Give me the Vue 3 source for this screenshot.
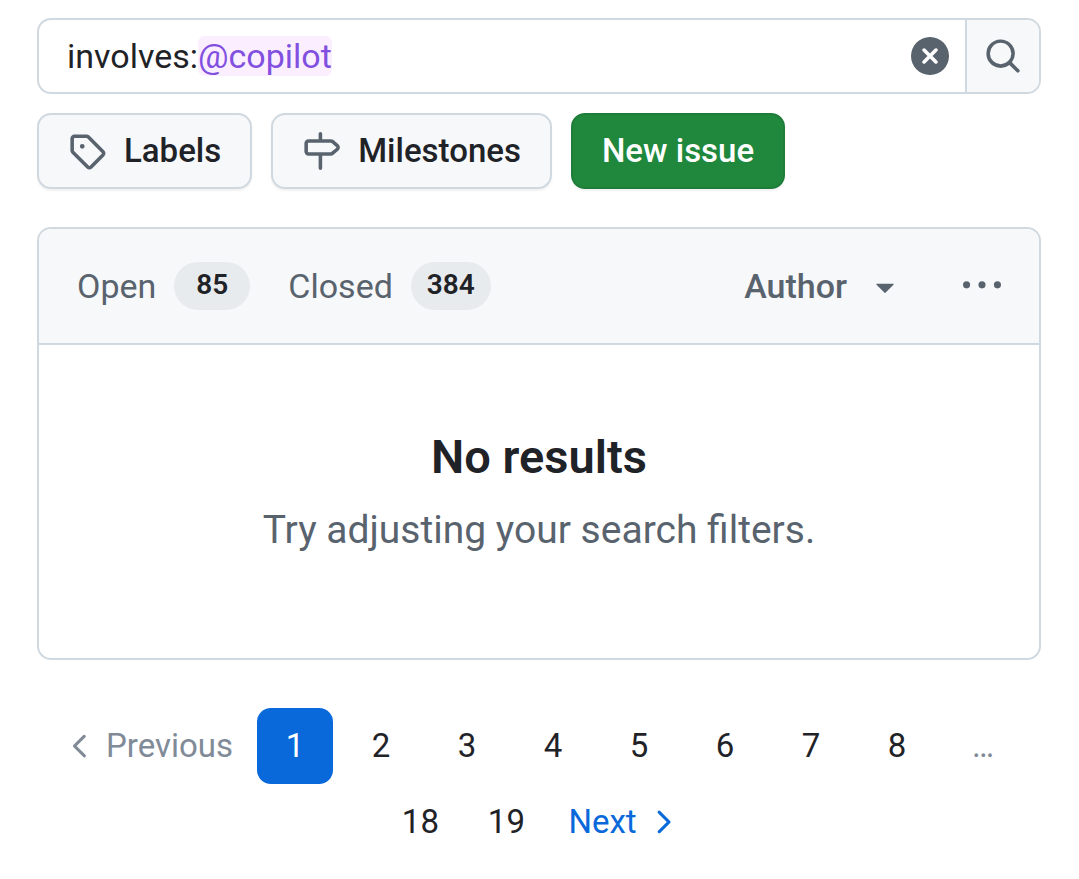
<template>
  <main class="issues">
    <form class="search" role="search" @submit.prevent>
      <div class="search-field">
        <div class="search-text" aria-hidden="true">
          <span v-for="(token, i) in tokens" :key="i" :class="{ 'search-value': token.isValue }">{{ token.text }}</span>
        </div>
        <input v-model="query" class="search-input" type="text" aria-label="Search issues" spellcheck="false" />
      </div>
      <button class="search-clear" type="button" aria-label="Clear filter" @click="query = ''">
        <svg class="icon" viewBox="0 0 16 16"><path :d="icons.clear" /></svg>
      </button>
      <button class="search-submit" type="submit" aria-label="Search">
        <svg class="icon" viewBox="0 0 16 16"><path :d="icons.search" /></svg>
      </button>
    </form>

    <div class="actions">
      <a class="btn" href="#labels">
        <svg class="icon" viewBox="0 0 16 16"><path :d="icons.tag" /></svg>
        Labels
      </a>
      <a class="btn" href="#milestones">
        <svg class="icon" viewBox="0 0 16 16"><path :d="icons.milestone" /></svg>
        Milestones
      </a>
      <a class="btn btn-primary" href="#new">New issue</a>
    </div>

    <section class="list">
      <header class="list-header">
        <a v-for="tab in tabs" :key="tab.name" class="tab" :href="tab.href">
          {{ tab.name }}
          <span class="counter">{{ tab.count }}</span>
        </a>
        <button class="filter" type="button" aria-haspopup="true">
          Author
          <svg class="icon" viewBox="0 0 16 16"><path :d="icons.triangle" /></svg>
        </button>
        <button class="more" type="button" aria-label="More filters" aria-haspopup="true">
          <svg class="icon" viewBox="0 0 16 16"><path :d="icons.kebab" /></svg>
        </button>
      </header>
      <div class="blank">
        <h2 class="blank-title">No results</h2>
        <p class="blank-text">Try adjusting your search filters.</p>
      </div>
    </section>

    <nav class="pagination" aria-label="Pagination">
      <span class="page page-step page-disabled">
        <svg class="icon" viewBox="0 0 16 16"><path :d="icons.left" /></svg>
        Previous
      </span>
      <template v-for="page in pages" :key="page">
        <span v-if="page === '…'" class="page page-disabled">{{ page }}</span>
        <a
          v-else
          class="page"
          :class="{ 'page-current': page === currentPage }"
          :href="`#page-${page}`"
          :aria-current="page === currentPage ? 'page' : undefined"
          @click="currentPage = page"
        >{{ page }}</a>
      </template>
      <a class="page page-step page-next" href="#next">
        Next
        <svg class="icon" viewBox="0 0 16 16"><path :d="icons.right" /></svg>
      </a>
    </nav>
  </main>
</template>

<script setup>
import { computed, ref } from 'vue'

const query = ref('involves:@copilot')
const currentPage = ref(1)

const tabs = [
  { name: 'Open', count: 85, href: '#open' },
  { name: 'Closed', count: 384, href: '#closed' }
]

const pages = [1, 2, 3, 4, 5, 6, 7, 8, '…', 18, 19]

// Everything after a "key:" is highlighted as a value
const tokens = computed(() => {
  return query.value
    .split(/(?<=:)(\S+)/)
    .map((text, i) => ({ text, isValue: i % 2 === 1 }))
    .filter((token) => token.text)
})

const icons = {
  clear: 'M2.343 13.657A8 8 0 1 1 13.658 2.343 8 8 0 0 1 2.343 13.657ZM6.03 4.97a.751.751 0 0 0-1.042.018.751.751 0 0 0-.018 1.042L6.94 8 4.97 9.97a.749.749 0 0 0 .326 1.275.749.749 0 0 0 .734-.215L8 9.06l1.97 1.97a.749.749 0 0 0 1.275-.326.749.749 0 0 0-.215-.734L9.06 8l1.97-1.97a.749.749 0 0 0-.326-1.275.749.749 0 0 0-.734.215L8 6.94Z',
  search: 'M10.68 11.74a6 6 0 0 1-7.922-8.982 6 6 0 0 1 8.982 7.922l3.04 3.04a.749.749 0 0 1-.326 1.275.749.749 0 0 1-.734-.215ZM11.5 7a4.499 4.499 0 1 0-8.997 0A4.499 4.499 0 0 0 11.5 7Z',
  tag: 'M1 7.775V2.75C1 1.784 1.784 1 2.75 1h5.025c.464 0 .91.184 1.238.513l6.25 6.25a1.75 1.75 0 0 1 0 2.474l-5.026 5.026a1.75 1.75 0 0 1-2.474 0l-6.25-6.25A1.752 1.752 0 0 1 1 7.775Zm1.5 0c0 .066.026.13.073.177l6.25 6.25a.25.25 0 0 0 .354 0l5.025-5.025a.25.25 0 0 0 0-.354l-6.25-6.25a.25.25 0 0 0-.177-.073H2.75a.25.25 0 0 0-.25.25ZM6 5a1 1 0 1 1 0 2 1 1 0 0 1 0-2Z',
  milestone: 'M7.75 0a.75.75 0 0 1 .75.75V3h3.634c.414 0 .814.147 1.13.414l2.07 1.75a1.75 1.75 0 0 1 0 2.672l-2.07 1.75a1.75 1.75 0 0 1-1.13.414H8.5v5.25a.75.75 0 0 1-1.5 0V10H2.75A1.75 1.75 0 0 1 1 8.25v-3.5C1 3.784 1.784 3 2.75 3H7V.75A.75.75 0 0 1 7.75 0Zm4.384 8.5a.25.25 0 0 0 .161-.06l2.07-1.75a.248.248 0 0 0 0-.38l-2.07-1.75a.25.25 0 0 0-.161-.06H2.75a.25.25 0 0 0-.25.25v3.5c0 .138.112.25.25.25h9.384Z',
  triangle: 'm4.427 7.427 3.396 3.396a.25.25 0 0 0 .354 0l3.396-3.396A.25.25 0 0 0 11.396 7H4.604a.25.25 0 0 0-.177.427Z',
  kebab: 'M8 9a1.5 1.5 0 1 0 0-3 1.5 1.5 0 0 0 0 3ZM1.5 9a1.5 1.5 0 1 0 0-3 1.5 1.5 0 0 0 0 3Zm13 0a1.5 1.5 0 1 0 0-3 1.5 1.5 0 0 0 0 3Z',
  left: 'M10.3 12.6a.6.6 0 0 1-.9 0L5.2 8.45a.65.65 0 0 1 0-.9L9.4 3.4a.64.64 0 0 1 .9.9L6.6 8l3.7 3.7a.64.64 0 0 1 0 .9Z',
  right: 'M5.9 3.4a.6.6 0 0 1 .9 0L11 7.55a.65.65 0 0 1 0 .9L6.8 12.6a.64.64 0 0 1-.9-.9L9.6 8 5.9 4.3a.64.64 0 0 1 0-.9Z'
}
</script>

<style>
body {
  margin: 0;
  background-color: #ffffff;
}
</style>

<style scoped>
.issues {
  box-sizing: border-box;
  padding: 18px 38px 19px 37px;
  color: #1f2328;
  font-family: Roboto, "Noto Sans", sans-serif;
  font-size: 33px;
  line-height: 48px;
}

.issues *,
.issues *::before {
  box-sizing: border-box;
}

a {
  color: inherit;
  text-decoration: none;
}

button {
  display: inline-flex;
  align-items: center;
  justify-content: center;
  padding: 0;
  border: 0;
  background: none;
  color: #59636e;
  font: inherit;
  cursor: pointer;
}

.icon {
  flex: none;
  width: 38px;
  height: 38px;
  fill: currentColor;
}

.search {
  display: flex;
  height: 76px;
  border: 2px solid #d1d9e0;
  border-radius: 14px;
  font-size: 34px;
  overflow: hidden;
}

/* The input sits on top of the highlighted copy of its text */
.search-field {
  display: grid;
  flex: 1;
  align-items: center;
  min-width: 0;
  padding-left: 28px;
}

.search-text,
.search-input {
  grid-area: 1 / 1;
  min-width: 0;
  white-space: pre;
}

.search-input {
  width: 100%;
  padding: 0;
  border: 0;
  outline: 0;
  background: none;
  color: transparent;
  caret-color: #1f2328;
  font: inherit;
}

.search-value {
  border-radius: 7px;
  background-color: #fbefff;
  color: #8250df;
}

.search-clear {
  width: 70px;
}

.search-submit {
  width: 74px;
  border-left: 2px solid #d1d9e0;
  background-color: #f6f8fa;
}

.actions {
  display: flex;
  flex-wrap: wrap;
  gap: 19px;
  margin-top: 19px;
}

.btn {
  display: inline-flex;
  align-items: center;
  gap: 18px;
  height: 76px;
  padding: 0 29px;
  border: 2px solid #d1d9e0;
  border-radius: 14px;
  background-color: #f6f8fa;
  box-shadow: 0 2px 2px rgba(31, 35, 40, 0.06);
  font-weight: 500;
}

.btn .icon {
  color: #59636e;
}

.btn-primary {
  border-color: #1f7d3a;
  background-color: #1f883d;
  color: #ffffff;
}

.list {
  margin-top: 38px;
  border: 2px solid #d1d9e0;
  border-radius: 14px;
  overflow: hidden;
}

.list-header {
  display: flex;
  align-items: center;
  gap: 38px;
  height: 116px;
  padding: 0 38px;
  border-bottom: 2px solid #d1d9e0;
  background-color: #f6f8fa;
  color: #59636e;
  font-size: 34px;
}

.tab {
  display: inline-flex;
  align-items: center;
  gap: 18px;
}

.counter {
  min-width: 76px;
  padding: 0 16px 2px;
  border-radius: 24px;
  background-color: #e8ebee;
  color: #1f2328;
  font-size: 28px;
  font-weight: 600;
  line-height: 46px;
  text-align: center;
}

.filter {
  gap: 19px;
  margin-left: auto;
  font-weight: 500;
}

.more {
  margin-left: 21px;
}

.blank {
  padding: 76px 38px 100px;
  text-align: center;
}

.blank-title {
  margin: 0;
  font-size: 47px;
  font-weight: 600;
  line-height: 72px;
}

.blank-text {
  margin: 9px 0 0;
  color: #59636e;
  font-size: 39px;
  line-height: 56px;
}

.pagination {
  display: flex;
  flex-wrap: wrap;
  justify-content: center;
  margin-top: 48px;
}

.page {
  display: inline-flex;
  align-items: center;
  justify-content: center;
  min-width: 76px;
  height: 76px;
  margin-right: 10px;
  padding: 0 14px;
  border-radius: 14px;
}

.page:last-child {
  margin-right: 0;
}

.page-step {
  gap: 7px;
}

.page-disabled {
  color: #818b98;
}

.page-current {
  background-color: #0969da;
  color: #ffffff;
}

.page-next {
  color: #0969da;
}
</style>
